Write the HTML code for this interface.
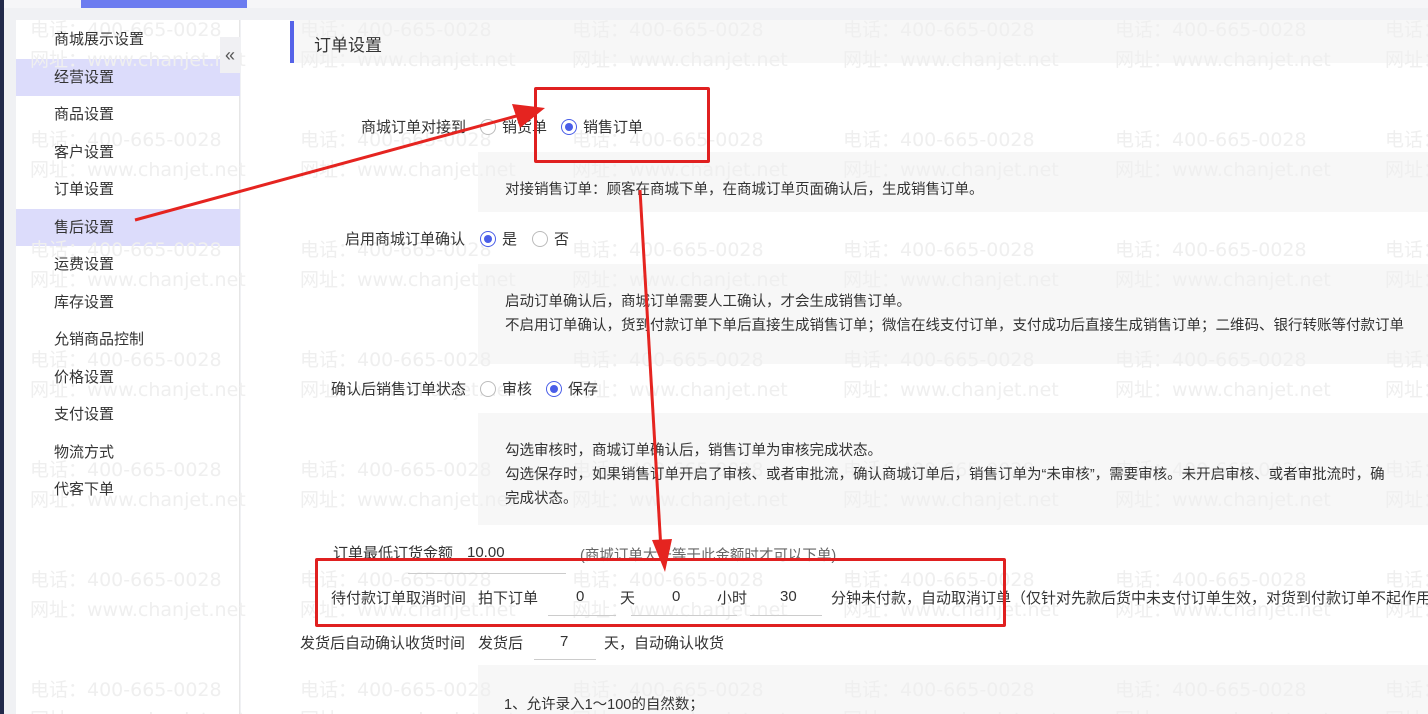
<!DOCTYPE html>
<html style="overflow:hidden"><head><meta charset="utf-8">
<style>
*{margin:0;padding:0;box-sizing:border-box}
html,body{overflow:hidden}
body{width:1428px;height:714px;background:#f0f1f4;position:relative;font-family:"Liberation Sans","Noto Sans CJK SC",sans-serif;font-size:15px;color:#333}
.a{position:absolute;white-space:nowrap;z-index:3}
.bg{position:absolute;z-index:0}
.wm{position:absolute;color:#efefef;font-size:19px;font-family:"DejaVu Sans","Noto Sans CJK SC",sans-serif;white-space:nowrap;line-height:30px;z-index:1;pointer-events:none}
.side .it{position:absolute;left:16px;width:224px;height:37px;padding-left:38px;line-height:37px;font-size:15px;z-index:3}
.act{background:#dcdcfb}
.radio{display:inline-block;width:16px;height:16px;border:1px solid #bbb;border-radius:50%;vertical-align:-3px;margin-right:6px;background:#fff;position:relative}
.radio.on{border-color:#4a5ee8}
.radio.on:after{content:"";position:absolute;left:3px;top:3px;width:8px;height:8px;border-radius:50%;background:#4a5ee8}
.panel{position:absolute;left:478px;width:950px;background:#f7f7f7;z-index:0}
.ul{position:absolute;height:1px;background:#ccc;z-index:3}
.rb{position:absolute;border:3px solid #e02020;border-radius:2px;z-index:5}
.d{font-size:14.5px}
</style></head><body>
<div class="bg" style="left:0;top:0;width:4px;height:714px;background:#222a4a"></div>
<div class="bg" style="left:4px;top:0;width:1424px;height:8px;background:#f6f6f8"></div>
<div class="bg" style="left:81px;top:0;width:166px;height:8px;background:#6c7cf0"></div>
<div class="bg" style="left:16px;top:20px;width:224px;height:694px;background:#fff;border-right:1px solid #e6e6e6"></div>
<div class="bg" style="left:241px;top:20px;width:1187px;height:694px;background:#fff"></div>
<div class="bg act" style="left:16px;top:59px;width:224px;height:37px"></div>
<div class="bg act" style="left:16px;top:209px;width:224px;height:37px"></div>
<div class="a" style="left:220px;top:37px;width:20px;height:36px;background:#f0f0f3;font-size:18px;line-height:36px;text-align:center;color:#555">«</div>
<div class="side">
<div class="it" style="top:21px">商城展示设置</div>
<div class="it" style="top:59px">经营设置</div>
<div class="it" style="top:96px">商品设置</div>
<div class="it" style="top:134px">客户设置</div>
<div class="it" style="top:171px">订单设置</div>
<div class="it" style="top:209px">售后设置</div>
<div class="it" style="top:246px">运费设置</div>
<div class="it" style="top:284px">库存设置</div>
<div class="it" style="top:321px">允销商品控制</div>
<div class="it" style="top:359px">价格设置</div>
<div class="it" style="top:396px">支付设置</div>
<div class="it" style="top:434px">物流方式</div>
<div class="it" style="top:471px">代客下单</div>
</div>
<div class="bg" style="left:290px;top:20px;width:1138px;height:43px;background:#f7f7f7"></div>
<div class="a" style="left:290px;top:21px;width:4px;height:42px;background:#5563e8"></div>
<div class="a" style="left:314px;top:31px;font-size:17px">订单设置</div>
<div class="panel" style="top:152px;height:60px"></div>
<div class="panel" style="top:264px;height:100px"></div>
<div class="panel" style="top:413px;height:112px"></div>
<div class="panel" style="top:665px;height:49px"></div>

<div class="a" style="left:361px;top:116px">商城订单对接到</div>
<div class="a" style="left:480px;top:116px"><span class="radio"></span>销货单</div>
<div class="a" style="left:561px;top:116px"><span class="radio on"></span>销售订单</div>
<div class="a d" style="left:505px;top:178px">对接销售订单：顾客在商城下单，在商城订单页面确认后，生成销售订单。</div>
<div class="a" style="left:345px;top:228px">启用商城订单确认</div>
<div class="a" style="left:480px;top:228px"><span class="radio on"></span>是</div>
<div class="a" style="left:532px;top:228px"><span class="radio"></span>否</div>
<div class="a d" style="left:505px;top:290px;line-height:24px">启动订单确认后，商城订单需要人工确认，才会生成销售订单。<br>不启用订单确认，货到付款订单下单后直接生成销售订单；微信在线支付订单，支付成功后直接生成销售订单；二维码、银行转账等付款订单</div>
<div class="a" style="left:331px;top:378px">确认后销售订单状态</div>
<div class="a" style="left:480px;top:378px"><span class="radio"></span>审核</div>
<div class="a" style="left:546px;top:378px"><span class="radio on"></span>保存</div>
<div class="a d" style="left:505px;top:439px;line-height:24px">勾选审核时，商城订单确认后，销售订单为审核完成状态。<br>勾选保存时，如果销售订单开启了审核、或者审批流，确认商城订单后，销售订单为“未审核”，需要审核。未开启审核、或者审批流时，确<br>完成状态。</div>
<div class="a" style="left:333px;top:542px">订单最低订货金额</div>
<div class="a" style="left:467px;top:544px">10.00</div>
<div class="ul" style="left:408px;top:573px;width:158px"></div>
<div class="a" style="left:580px;top:544px;color:#666;font-size:14.5px">(商城订单大于等于此金额时才可以下单)</div>
<div class="a" style="left:331px;top:587px">待付款订单取消时间</div>
<div class="a" style="left:478px;top:587px">拍下订单</div>
<div class="a" style="left:576px;top:588px">0</div><div class="ul" style="left:548px;top:615px;width:68px"></div>
<div class="a" style="left:620px;top:587px">天</div>
<div class="a" style="left:672px;top:588px">0</div><div class="ul" style="left:631px;top:615px;width:106px"></div>
<div class="a" style="left:717px;top:587px">小时</div>
<div class="a" style="left:780px;top:588px">30</div><div class="ul" style="left:750px;top:615px;width:72px"></div>
<div class="a" style="left:831px;top:587px">分钟未付款，自动取消订单（仅针对先款后货中未支付订单生效，对货到付款订单不起作用</div>
<div class="a" style="left:300px;top:632px">发货后自动确认收货时间</div>
<div class="a" style="left:478px;top:632px">发货后</div>
<div class="a" style="left:560px;top:633px">7</div><div class="ul" style="left:534px;top:659px;width:62px"></div>
<div class="a" style="left:604px;top:632px">天，自动确认收货</div>
<div class="a d" style="left:504px;top:693px">1、允许录入1～100的自然数；</div>

<div class="rb" style="left:534px;top:87px;width:176px;height:76px"></div>
<div class="rb" style="left:315px;top:558px;width:691px;height:69px"></div>
<svg style="position:absolute;left:0;top:0;z-index:6" width="1428" height="714">
<line x1="135" y1="220" x2="520" y2="115" stroke="#e52420" stroke-width="3"/>
<polygon points="545,108 512,104 520,128" fill="#e52420"/>
<line x1="640" y1="190" x2="661" y2="550" stroke="#e52420" stroke-width="3"/>
<polygon points="665,572 652,540 672,539" fill="#e52420"/>
</svg>
<div id="w"></div>
<script>
var h='';var xs=[30,300,572,843,1115,1385];var ys=[15,125,235,345,455,565,675];
xs.forEach(function(x){ys.forEach(function(y){h+='<div class="wm" style="left:'+x+'px;top:'+y+'px">电话：400-665-0028<br>网址：www.chanjet.net</div>';});});
document.getElementById('w').innerHTML=h;
</script>
</body></html>
